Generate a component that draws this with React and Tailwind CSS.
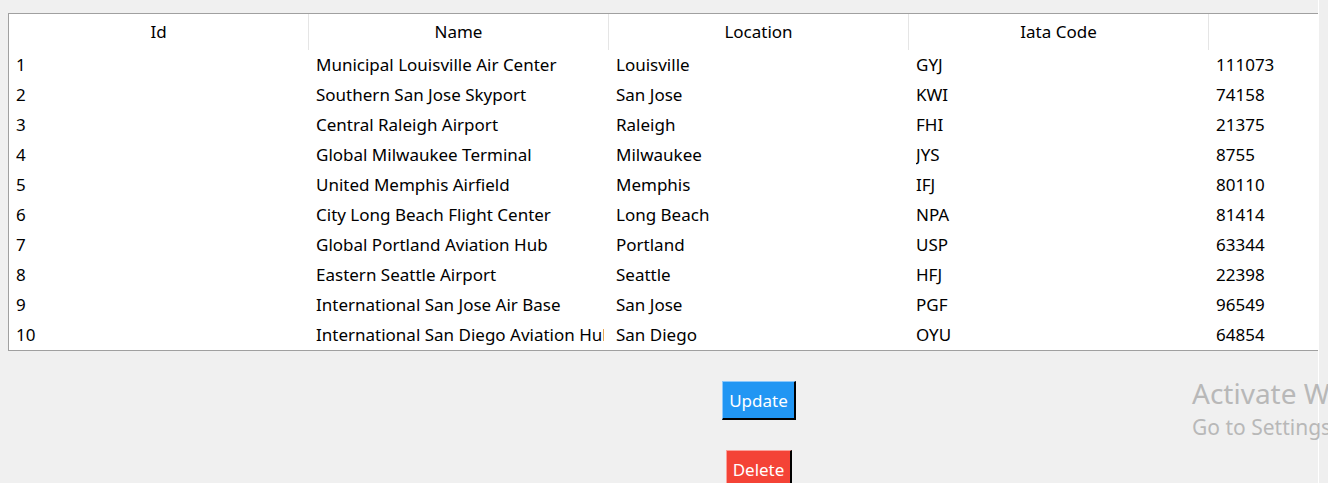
import React from 'react';

const airports = [
  { id: 1, name: 'Municipal Louisville Air Center', location: 'Louisville', iata: 'GYJ', extra: '111073' },
  { id: 2, name: 'Southern San Jose Skyport', location: 'San Jose', iata: 'KWI', extra: '74158' },
  { id: 3, name: 'Central Raleigh Airport', location: 'Raleigh', iata: 'FHI', extra: '21375' },
  { id: 4, name: 'Global Milwaukee Terminal', location: 'Milwaukee', iata: 'JYS', extra: '8755' },
  { id: 5, name: 'United Memphis Airfield', location: 'Memphis', iata: 'IFJ', extra: '80110' },
  { id: 6, name: 'City Long Beach Flight Center', location: 'Long Beach', iata: 'NPA', extra: '81414' },
  { id: 7, name: 'Global Portland Aviation Hub', location: 'Portland', iata: 'USP', extra: '63344' },
  { id: 8, name: 'Eastern Seattle Airport', location: 'Seattle', iata: 'HFJ', extra: '22398' },
  { id: 9, name: 'International San Jose Air Base', location: 'San Jose', iata: 'PGF', extra: '96549' },
  { id: 10, name: 'International San Diego Aviation Hub', location: 'San Diego', iata: 'OYU', extra: '64854' },
];

const headers = ['Id', 'Name', 'Location', 'Iata Code', ''];

const Cell = ({ children }) => (
  <div className="w-[300px] shrink-0 pl-[7px] leading-[30px]">
    <div className="w-[288px] overflow-hidden whitespace-nowrap">{children}</div>
  </div>
);

const App = () => {
  return (
    <div className="relative flex h-[483px] w-[1328px] overflow-hidden bg-[#f0f0f0] font-['Noto_Sans',sans-serif] text-[17px] text-black">
      <div className="w-[1318px] shrink-0 overflow-hidden">
        <div className="flex w-[1518px] flex-col items-center pt-[13px]">
          <div className="ml-[8px] w-[1510px] self-start border border-[#a0a0a0] bg-white">
            <div className="flex h-[36px]">
              {headers.map((h, i) => (
                <div key={i} className="flex w-[300px] shrink-0 items-center justify-center border-r border-[#e5e5e5]">
                  {h}
                </div>
              ))}
            </div>
            {airports.map((a) => (
              <div key={a.id} className="flex h-[30px]">
                <Cell>{a.id}</Cell>
                <Cell>{a.name}</Cell>
                <Cell>{a.location}</Cell>
                <Cell>{a.iata}</Cell>
                <Cell>{a.extra}</Cell>
              </div>
            ))}
          </div>
          <button className="mt-[30px] h-[39px] w-[74px] border-t border-l border-b-2 border-r-2 border-t-[#8cc8fb] border-l-[#8cc8fb] border-b-black border-r-black bg-[#2196f3] pt-[2px] text-[17px] text-white">
            Update
          </button>
          <button className="mt-[30px] h-[39px] w-[66px] border-t border-l border-b-2 border-r-2 border-t-[#fba19a] border-l-[#fba19a] border-b-black border-r-black bg-[#f44336] pt-[2px] text-[17px] text-white">
            Delete
          </button>
        </div>
      </div>
      <div className="w-[1px] shrink-0 bg-white" />
      <div className="flex-1 bg-[#efefef]" />
      <div className="pointer-events-none absolute left-[1192px] top-[374px] whitespace-nowrap text-[#b8b8b8]">
        <div className="text-[28px] leading-[38px]">Activate Windows</div>
        <div className="text-[21px] leading-[30px]">Go to Settings to activate Windows.</div>
      </div>
    </div>
  );
};

export default App;
